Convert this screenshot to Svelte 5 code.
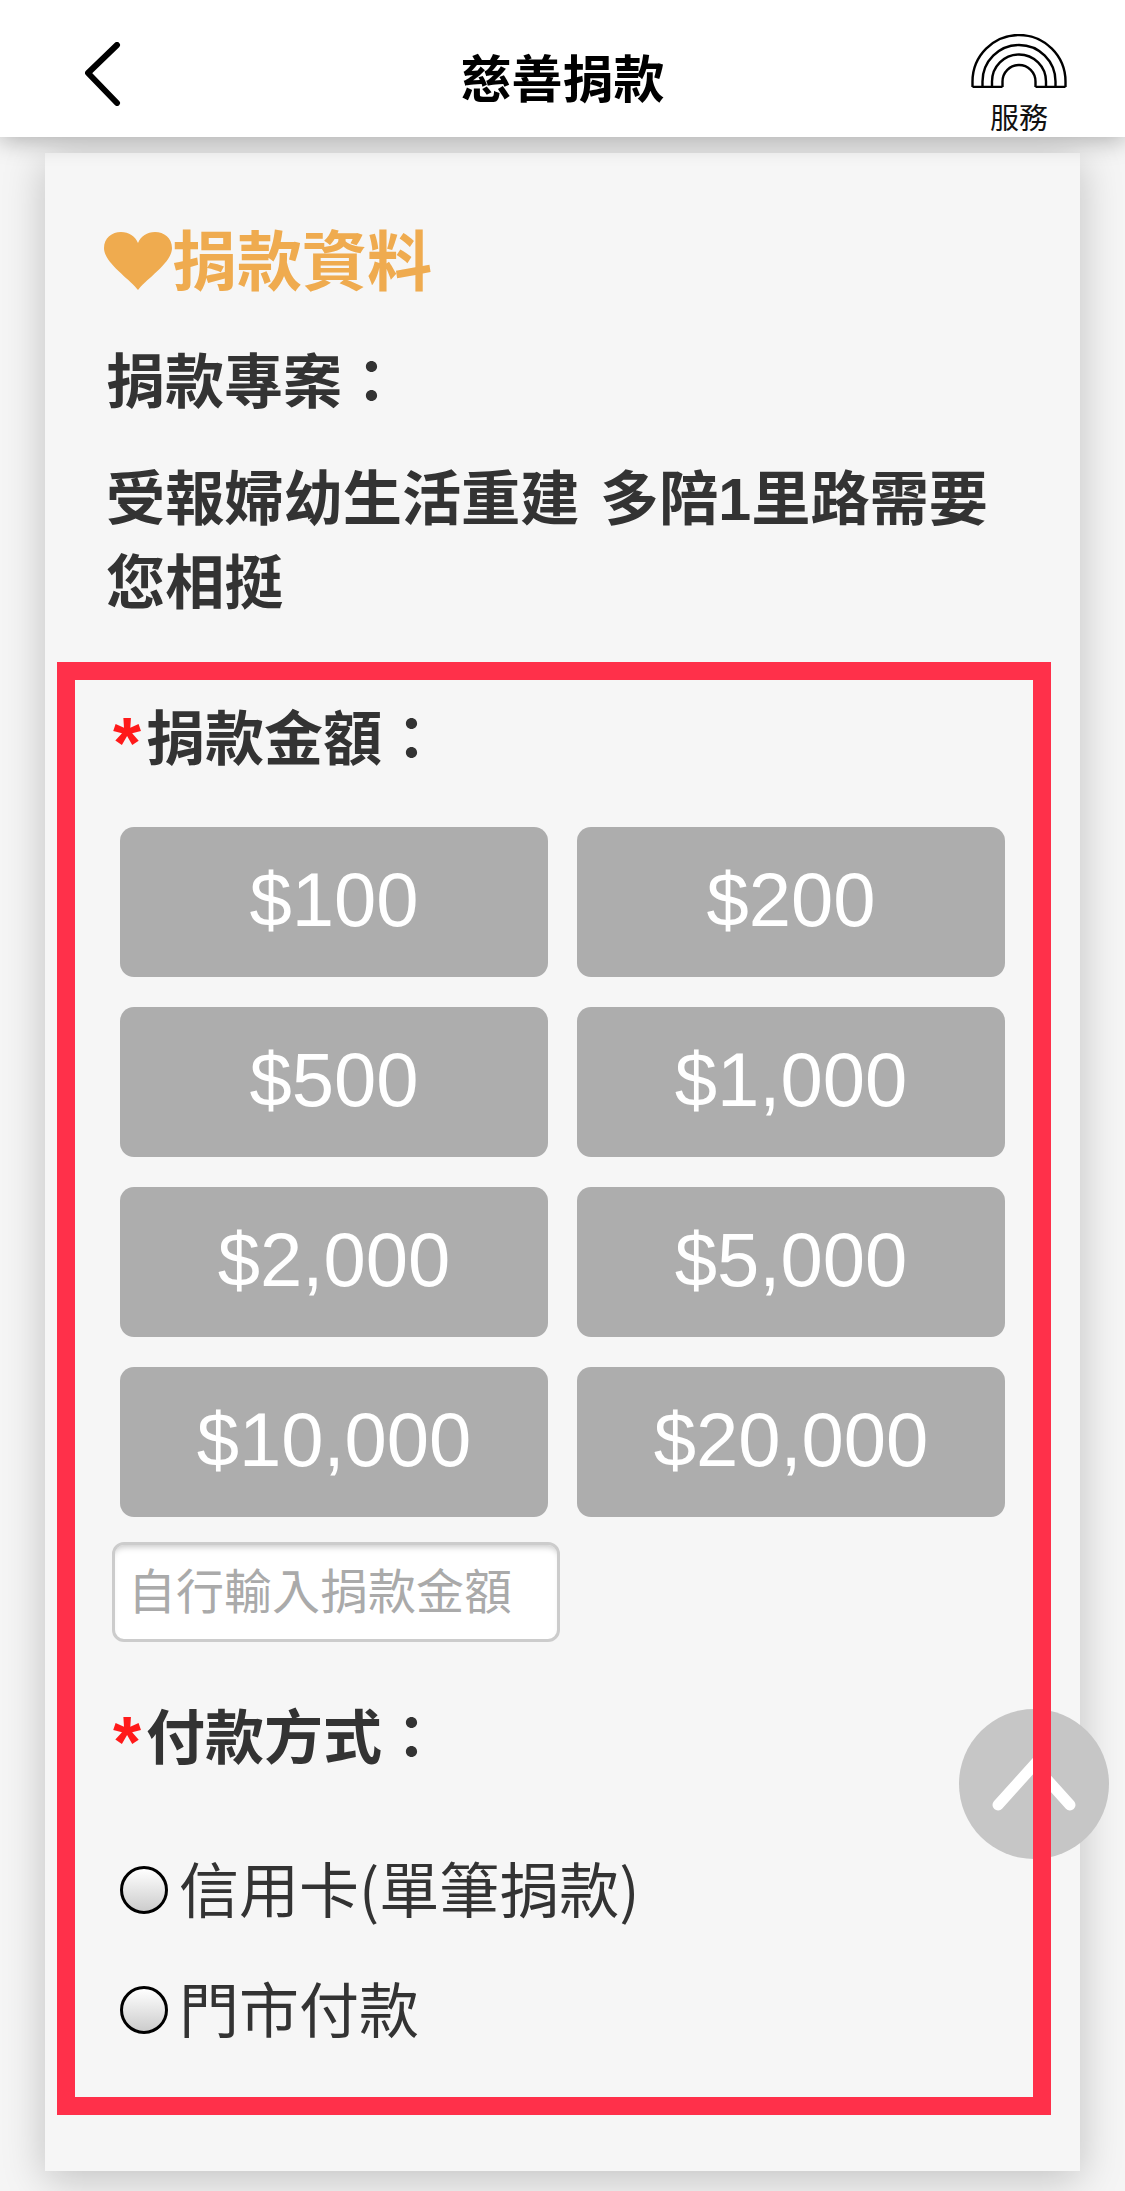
<script>
  const amounts = ['$100', '$200', '$500', '$1,000', '$2,000', '$5,000', '$10,000', '$20,000']
  const payments = ['信用卡(單筆捐款)', '門市付款']
</script>

<div class="page">
  <header>
    <svg class="back" viewBox="0 0 36 64" aria-label="返回">
      <polyline points="32,3 3,31 32,61" />
    </svg>
    <h1>慈善捐款</h1>
    <div class="service">
      <svg viewBox="0 0 96 54">
        <path d="M1.5 53V47.5A46.5 46.5 0 0 1 94.5 47.5V53" />
        <path d="M11.5 53V47.5A36.5 36.5 0 0 1 84.5 47.5V53" />
        <path d="M21 53V47.5A27 27 0 0 1 75 47.5V53" />
        <path d="M31.5 53V47.5A16.5 16.5 0 0 1 64.5 47.5V53" />
        <path d="M1.5 53H31.5M64.5 53H94.5" />
      </svg>
      <span>服務</span>
    </div>
  </header>

  <main class="card">
    <h2>
      <svg class="heart" viewBox="0 0 68 58">
        <path d="M34 58C26 47 0 31 0 16C0 6 8 0 17 0C25 0 31 4 34 11C37 4 43 0 51 0C60 0 68 6 68 16C68 31 42 47 34 58Z" />
      </svg>
      捐款資料
    </h2>
    <p class="label">捐款專案：</p>
    <p class="project">受報婦幼生活重建 多陪1里路需要<br />您相挺</p>

    <section class="form">
      <p class="label field"><span class="star">*</span>捐款金額：</p>
      <div class="amounts">
        {#each amounts as amount}
          <button type="button">{amount}</button>
        {/each}
      </div>
      <input class="custom" type="text" placeholder="自行輸入捐款金額" />

      <p class="label field pay"><span class="star">*</span>付款方式：</p>
      <div class="payments">
        {#each payments as payment}
          <label>
            <input type="radio" name="payment" />
            <span>{payment}</span>
          </label>
        {/each}
      </div>
    </section>
  </main>

  <div class="to-top">
    <svg viewBox="0 0 150 150">
      <polyline points="39,96 75,56 111,96" />
    </svg>
  </div>
</div>

<style>
  :global(body) {
    background: #f5f5f5;
    overflow: hidden;
  }
  .page {
    position: relative;
    height: 2191px;
    overflow: hidden;
    font-family: "Noto Sans CJK TC", "Liberation Sans", sans-serif;
    color: #333;
  }
  p, h1, h2 {
    margin: 0;
  }
  header {
    position: relative;
    z-index: 3;
    display: grid;
    grid-template-columns: 1fr auto 1fr;
    box-sizing: border-box;
    height: 137px;
    padding-top: 15px;
    align-items: center;
    background: #fff;
    box-shadow: 0 4px 22px rgba(0, 0, 0, 0.28);
  }
  .back {
    width: 36px;
    height: 64px;
    margin-left: 85px;
    margin-top: -4px;
  }
  .back polyline {
    fill: none;
    stroke: #000;
    stroke-width: 6;
    stroke-linecap: round;
    stroke-linejoin: round;
  }
  h1 {
    font-size: 51px;
    line-height: 60px;
    font-weight: 700;
    color: #000;
  }
  .service {
    justify-self: end;
    align-self: start;
    display: flex;
    flex-direction: column;
    align-items: center;
    width: 96px;
    margin: 19px 58px 0 0;
    font-size: 29px;
    line-height: 34px;
    color: #111;
  }
  .service svg {
    display: block;
    width: 96px;
    height: 54px;
    margin-bottom: 11px;
  }
  .service path {
    fill: none;
    stroke: #000;
    stroke-width: 2.4;
  }
  .card {
    margin: 16px 45px 0;
    padding: 64px 0 56px;
    background: #f6f6f6;
    box-shadow: 0 8px 40px rgba(0, 0, 0, 0.22);
  }
  h2 {
    display: flex;
    align-items: center;
    height: 80px;
    margin: 0 0 36px 59px;
    font-size: 65px;
    font-weight: 700;
    color: #efab4f;
  }
  .heart {
    width: 68px;
    height: 58px;
    margin-top: 8px;
    fill: #efab4f;
  }
  .label {
    padding-left: 61px;
    font-size: 59px;
    line-height: 90px;
    font-weight: 700;
  }
  .project {
    margin: 35px 0 36px;
    padding-left: 61px;
    font-family: "Liberation Sans", "Noto Sans CJK TC", sans-serif;
    font-size: 59.2px;
    line-height: 84px;
    font-weight: 700;
    word-spacing: 4px;
  }
  .form {
    position: relative;
    z-index: 2;
    width: 994px;
    box-sizing: border-box;
    margin-left: 12px;
    padding: 13px 0 27px;
    border: 18px solid #ff304a;
  }
  .field {
    display: flex;
    align-items: center;
    padding-left: 38px;
    line-height: 84px;
  }
  .star {
    width: 33px;
    height: 84px;
    font-family: "Liberation Sans", sans-serif;
    font-size: 72px;
    line-height: 100px;
    font-weight: 700;
    color: #ff1a1a;
  }
  .amounts {
    display: grid;
    grid-template-columns: 428px 428px;
    gap: 30px 29px;
    margin: 50px 0 25px 45px;
  }
  button {
    height: 150px;
    padding: 0 0 5px;
    border: none;
    border-radius: 14px;
    background: #adadad;
    color: #fff;
    font-family: "Liberation Sans", sans-serif;
    font-size: 76px;
    font-weight: 400;
  }
  .custom {
    display: block;
    box-sizing: border-box;
    width: 448px;
    height: 100px;
    margin-left: 37px;
    padding: 0 0 8px 13px;
    border: 3px solid #ccc;
    border-radius: 12px;
    background: #fff;
    box-shadow: inset 0 6px 6px -4px rgba(0, 0, 0, 0.22);
    font-family: inherit;
    font-size: 48px;
    outline: none;
  }
  .custom::placeholder {
    color: #aaa;
    opacity: 1;
  }
  .pay {
    margin-top: 50px;
  }
  .payments {
    margin: 54px 0 0 45px;
  }
  label {
    display: flex;
    align-items: center;
    gap: 11px;
    height: 120px;
    font-size: 60px;
    color: #333;
  }
  label span {
    padding-bottom: 8px;
  }
  input[type="radio"] {
    appearance: none;
    width: 48px;
    height: 48px;
    margin: 0;
    border: 3px solid #000;
    border-radius: 50%;
    background: linear-gradient(#fff, #ccc);
  }
  .to-top {
    position: absolute;
    z-index: 1;
    top: 1709px;
    right: 16px;
    width: 150px;
    height: 150px;
    border-radius: 50%;
    background: #c6c6c6;
  }
  .to-top svg {
    display: block;
  }
  .to-top polyline {
    fill: none;
    stroke: #fff;
    stroke-width: 11;
    stroke-linecap: round;
  }
</style>
